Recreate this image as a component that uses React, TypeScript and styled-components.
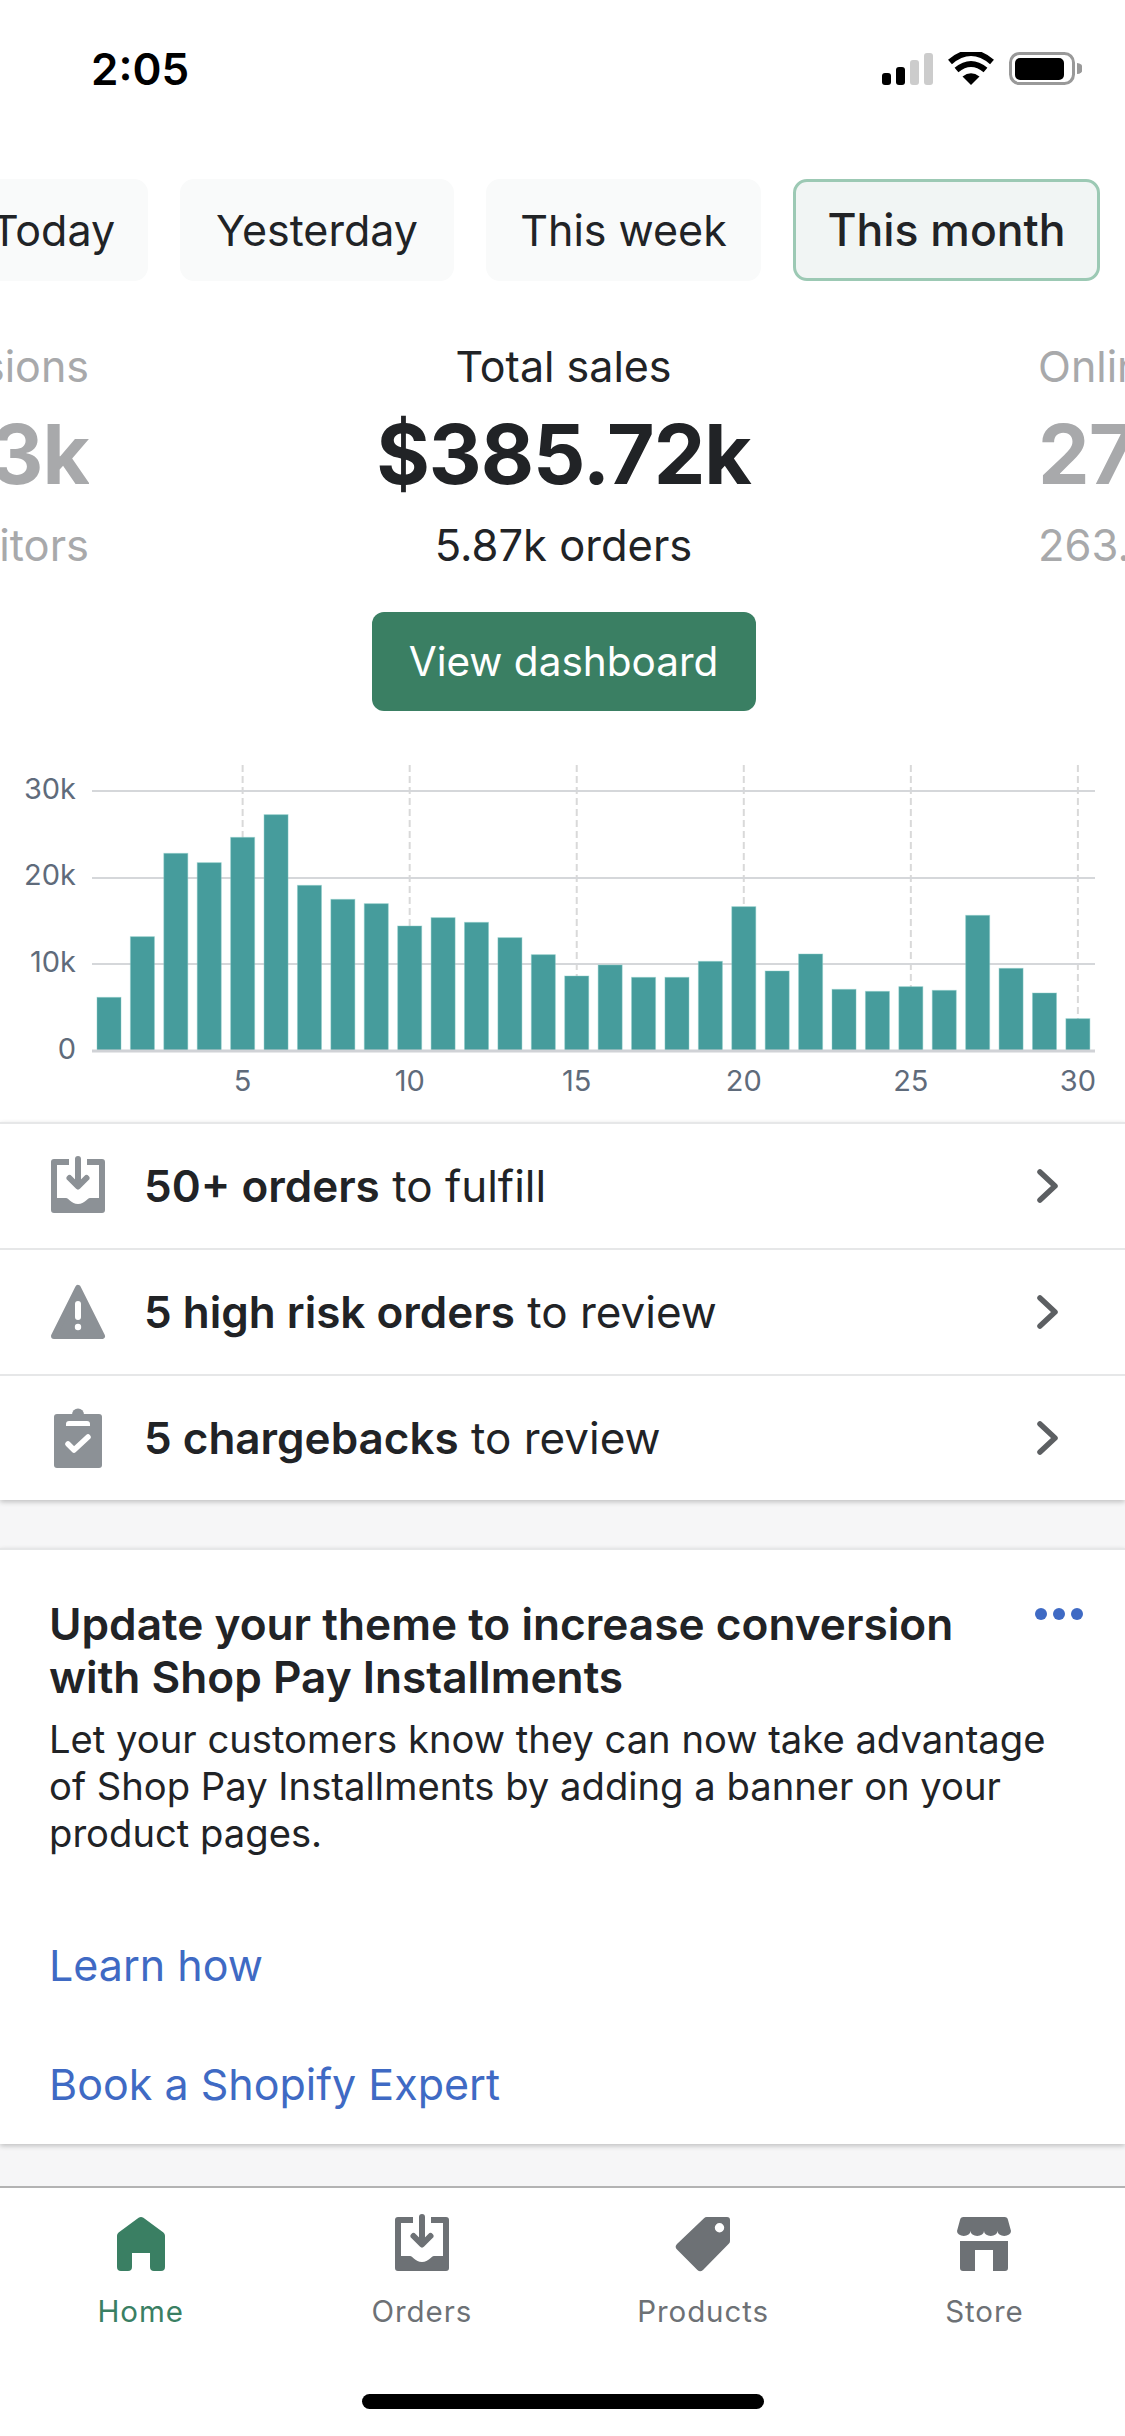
import styled, { createGlobalStyle } from 'styled-components';
import { ReactNode } from 'react';

const GlobalStyle = createGlobalStyle`
  html, body { margin: 0; padding: 0; background: #fff; }
  body { font-family: Inter, "Noto Sans", sans-serif; color: #212326; }
`;

const Screen = styled.div`
  width: 1125px;
  height: 2436px;
  overflow: hidden;
  display: flex;
  flex-direction: column;
  background: #f6f6f7;
`;

const Top = styled.div`
  background: #fff;
`;

const StatusBar = styled.div`
  height: 179px;
  box-sizing: border-box;
  padding: 44px 43px 0 91px;
  display: flex;
  justify-content: space-between;
  align-items: flex-start;
`;

const Time = styled.span`
  font-size: 44px;
  line-height: 50px;
  font-weight: 600;
  color: #000;
`;

const Pills = styled.div`
  display: flex;
  justify-content: flex-end;
  gap: 32px;
  padding-right: 25px;
  overflow: hidden;
`;

const Pill = styled.div<{ $active?: boolean; $width: number }>`
  flex: none;
  width: ${(p) => p.$width}px;
  height: 102px;
  box-sizing: border-box;
  display: flex;
  align-items: center;
  justify-content: center;
  font-size: ${(p) => (p.$active ? 44.5 : 43)}px;
  font-weight: ${(p) => (p.$active ? 500 : 400)};
  border-radius: 14px;
  background: ${(p) => (p.$active ? '#f1f5f4' : '#f9fafa')};
  border: 3px solid ${(p) => (p.$active ? '#9cc9b4' : '#f9fafa')};
  color: #212326;
`;

const Stats = styled.div`
  display: grid;
  grid-template-columns: 89px 1fr 87px;
  margin-top: 59px;
`;

const Stat = styled.div<{ $side?: 'left' | 'right' }>`
  display: flex;
  flex-direction: column;
  overflow: hidden;
  white-space: nowrap;
  align-items: ${(p) => (p.$side === 'left' ? 'flex-end' : p.$side === 'right' ? 'flex-start' : 'center')};
  color: ${(p) => (p.$side ? '#a8a9ab' : '#212326')};
`;

const StatLabel = styled.div`
  font-size: 43px;
  line-height: 52px;
`;

const StatValue = styled.div`
  font-size: 82px;
  line-height: 100px;
  font-weight: 700;
  letter-spacing: -1px;
  margin-top: 13px;
`;

const StatSub = styled.div`
  font-size: 43.5px;
  line-height: 52px;
  margin-top: 14px;
`;

const PrimaryButton = styled.div`
  align-self: center;
  margin: 41px auto 0;
  width: 384px;
  height: 99px;
  display: flex;
  align-items: center;
  justify-content: center;
  border-radius: 12px;
  background: #3a7f63;
  color: #fff;
  font-size: 40.5px;
`;

const Chart = styled.svg`
  display: block;
  margin-top: 39px;
`;

const List = styled.div`
  background: #fff;
  border-top: 2px solid #e6e7e8;
  box-shadow: 0 2px 5px rgba(0, 0, 0, 0.22);
  position: relative;
`;

const Row = styled.div<{ $last?: boolean }>`
  height: 124px;
  display: flex;
  align-items: center;
  padding: 0 65px 0 51px;
  border-bottom: ${(p) => (p.$last ? 'none' : '2px solid #e6e7e8')};
  font-size: 44px;
  color: #212326;
`;

const RowIcon = styled.svg`
  flex: none;
  width: 54px;
  height: 54px;
  overflow: visible;
  margin-right: 39px;
  fill: #8c9196;
`;

const RowText = styled.div`
  flex: 1;
  b {
    font-weight: 600;
  }
`;

const Card = styled.div`
  margin-top: 48px;
  height: 596px;
  box-sizing: border-box;
  background: #fff;
  border-top: 2px solid #e6e7e8;
  box-shadow: 0 2px 5px rgba(0, 0, 0, 0.22);
  padding: 48px 49px 0;
  position: relative;
`;

const CardTitle = styled.div`
  font-size: 44.2px;
  line-height: 53px;
  font-weight: 600;
  color: #212326;
`;

const CardBody = styled.div`
  font-size: 38.2px;
  line-height: 47px;
  margin-top: 12px;
  color: #212326;
`;

const CardLink = styled.div<{ $gap: number }>`
  font-size: 43px;
  line-height: 52px;
  color: #3f6ac4;
  margin-top: ${(p) => p.$gap}px;
`;

const Dots = styled.div`
  position: absolute;
  top: 58px;
  right: 42px;
  display: flex;
  gap: 6px;
  span {
    width: 12px;
    height: 12px;
    border-radius: 50%;
    background: #3f6ac4;
  }
`;

const TabBar = styled.div`
  margin-top: 42px;
  flex: 1;
  background: #fff;
  border-top: 2px solid #b3b3b3;
  display: flex;
  flex-direction: column;
`;

const Tabs = styled.div`
  display: grid;
  grid-template-columns: repeat(4, 1fr);
  padding-top: 29px;
`;

const Tab = styled.div<{ $active?: boolean }>`
  display: flex;
  flex-direction: column;
  align-items: center;
  color: ${(p) => (p.$active ? '#3a7f63' : '#6d7175')};
  fill: currentColor;
  font-size: 29.5px;
  line-height: 36px;
  letter-spacing: 0.9px;
`;

const TabIcon = styled.svg`
  width: 54px;
  height: 54px;
  overflow: visible;
  margin-bottom: 22px;
`;

const HomeIndicator = styled.div`
  width: 402px;
  height: 15px;
  border-radius: 8px;
  background: #000;
  margin: 65px auto 0;
`;

const BARS = [742, 560, 310, 338, 262, 194, 406, 448, 461, 528, 503, 517, 563, 614, 678, 645, 682, 682, 634, 470, 663, 612, 718, 724, 710, 721, 496, 655, 729, 806];
const barCenter = (day: number) => 109 + (day - 1) * 33.41;
const barTop = (v: number) => 750 + v / 3;

const InboxPath = 'M3 0H18V6H6V39H15C18 39 20 45 27 45C34 45 36 39 39 39H48V6H36V0H51a3 3 0 0 1 3 3V51a3 3 0 0 1-3 3H3a3 3 0 0 1-3-3V3a3 3 0 0 1 3-3Z';

const InboxGlyph = () => (
  <>
    <path d={InboxPath} />
    <path d="M27 0V26M18.5 19L27 27.5L35.5 19" fill="none" stroke="currentColor" strokeWidth="6" strokeLinecap="round" strokeLinejoin="round" />
  </>
);

const Chevron = () => (
  <svg width="24" height="36" viewBox="0 0 24 36" fill="none" stroke="#5c5f62" strokeWidth="5.5" strokeLinecap="round" strokeLinejoin="round">
    <path d="M4 4L19 18L4 32" />
  </svg>
);

const SalesChart = () => (
  <Chart width="1125" height="372" viewBox="0 750 1125 372">
    {[5, 10, 15, 20, 25, 30].map((d) => (
      <line key={d} x1={barCenter(d)} x2={barCenter(d)} y1="765" y2="1050" stroke="#d9d9d9" strokeWidth="2" strokeDasharray="7 4" />
    ))}
    {[791, 878, 964].map((y) => (
      <line key={y} x1="92" x2="1095" y1={y} y2={y} stroke="#d5d7da" strokeWidth="2" />
    ))}
    {BARS.map((v, i) => (
      <rect key={i} x={barCenter(i + 1) - 12} y={barTop(v)} width="24" height={1051 - barTop(v)} fill="#469c9c" stroke="#84c9c5" strokeOpacity="0.45" strokeWidth="1" />
    ))}
    <line x1="92" x2="1095" y1="1051" y2="1051" stroke="#d0d2d6" strokeWidth="3" />
    <g fontFamily="Inter" fontSize="29" fill="#5f6b7b">
      {[['30k', 799], ['20k', 885], ['10k', 972], ['0', 1059]].map(([t, y]) => (
        <text key={t} x="76" y={y} textAnchor="end">{t}</text>
      ))}
      {[5, 10, 15, 20, 25, 30].map((d) => (
        <text key={d} x={barCenter(d)} y="1091" textAnchor="middle">{d}</text>
      ))}
    </g>
  </Chart>
);

const SignalIcons = () => (
  <svg width="200" height="33" viewBox="882 52 200 33" style={{ marginTop: 8 }}>
    <rect x="882" y="73" width="9" height="12" rx="3" fill="#000" />
    <rect x="896" y="67" width="9" height="18" rx="3" fill="#000" />
    <rect x="910" y="60" width="9" height="25" rx="3" fill="#ccc" />
    <rect x="924" y="53" width="9" height="32" rx="3" fill="#ccc" />
    <path d="M971 85L962.5 76.5Q971 70 979.5 76.5Z" fill="#000" />
    <path d="M956.5 70Q971 58 985.5 70" fill="none" stroke="#000" strokeWidth="6" />
    <path d="M950 62Q971 44 992 62" fill="none" stroke="#000" strokeWidth="6" />
    <rect x="1010.5" y="53.5" width="63" height="30" rx="9" fill="none" stroke="#999" strokeWidth="3" />
    <rect x="1015" y="58" width="49" height="22" rx="5" fill="#000" />
    <path d="M1077 63a6 5.5 0 0 1 0 11Z" fill="#999" />
  </svg>
);

const TabItem = ({ label, active, children }: { label: string; active?: boolean; children: ReactNode }) => (
  <Tab $active={active}>
    <TabIcon viewBox="0 0 54 54">{children}</TabIcon>
    {label}
  </Tab>
);

const App = () => (
  <Screen>
    <GlobalStyle />
    <Top>
      <StatusBar>
        <Time>2:05</Time>
        <SignalIcons />
      </StatusBar>
      <Pills>
        <Pill $width={190}>Today</Pill>
        <Pill $width={274}>Yesterday</Pill>
        <Pill $width={275}>This week</Pill>
        <Pill $active $width={307}>This month</Pill>
      </Pills>
      <Stats>
        <Stat $side="left">
          <StatLabel>Sessions</StatLabel>
          <StatValue>3k</StatValue>
          <StatSub>Visitors</StatSub>
        </Stat>
        <Stat>
          <StatLabel>Total sales</StatLabel>
          <StatValue>$385.72k</StatValue>
          <StatSub>5.87k orders</StatSub>
          <PrimaryButton>View dashboard</PrimaryButton>
        </Stat>
        <Stat $side="right">
          <StatLabel>Online store</StatLabel>
          <StatValue>27</StatValue>
          <StatSub>263.</StatSub>
        </Stat>
      </Stats>
      <SalesChart />
    </Top>
    <List>
      <Row>
        <RowIcon viewBox="0 0 54 54" color="#8c9196"><InboxGlyph /></RowIcon>
        <RowText><b>50+ orders</b> to fulfill</RowText>
        <Chevron />
      </Row>
      <Row>
        <RowIcon viewBox="0 0 54 54">
          <path d="M27 3L51 51H3Z" stroke="#8c9196" strokeWidth="6" strokeLinejoin="round" />
          <path d="M27 19V32" stroke="#fff" strokeWidth="6" strokeLinecap="round" />
          <circle cx="27" cy="42" r="3.2" fill="#fff" />
        </RowIcon>
        <RowText><b>5 high risk orders</b> to review</RowText>
        <Chevron />
      </Row>
      <Row $last>
        <RowIcon viewBox="0 0 54 54">
          <circle cx="27" cy="3.5" r="6" />
          <rect x="3" y="3" width="48" height="54" rx="3" />
          <path d="M15 15V13a3 3 0 0 1 3-3H36a3 3 0 0 1 3 3V15Z" fill="#fff" />
          <path d="M17 33L23 39L37 26" fill="none" stroke="#fff" strokeWidth="5.5" strokeLinecap="round" strokeLinejoin="round" />
        </RowIcon>
        <RowText><b>5 chargebacks</b> to review</RowText>
        <Chevron />
      </Row>
    </List>
    <Card>
      <Dots><span /><span /><span /></Dots>
      <CardTitle>
        Update your theme to increase conversion
        <br />
        with Shop Pay Installments
      </CardTitle>
      <CardBody>
        Let your customers know they can now take advantage
        <br />
        of Shop Pay Installments by adding a banner on your
        <br />
        product pages.
      </CardBody>
      <CardLink $gap={82}>Learn how</CardLink>
      <CardLink $gap={67}>Book a Shopify Expert</CardLink>
    </Card>
    <TabBar>
      <Tabs>
        <TabItem label="Home" active>
          <path transform="translate(3 0)" d="M21.6.8a4 4 0 0 1 4.8 0L46.4 15.6a4 4 0 0 1 1.6 3.2V50a4 4 0 0 1-4 4H37a4 4 0 0 1-4-4V36H15V50a4 4 0 0 1-4 4H4a4 4 0 0 1-4-4V18.8a4 4 0 0 1 1.6-3.2Z" />
        </TabItem>
        <TabItem label="Orders"><g color="#6d7175"><InboxGlyph /></g></TabItem>
        <TabItem label="Products">
          <path fillRule="evenodd" d="M31 0H51a3 3 0 0 1 3 3V24a4 4 0 0 1-1 2.6L27 53a4 4 0 0 1-5.6 0L1 32.5a4 4 0 0 1 0-5.6L28 1.2A4 4 0 0 1 31 0ZM43.5 6a4.7 4.7 0 1 0 0 9.4a4.7 4.7 0 0 0 0-9.4Z" />
        </TabItem>
        <TabItem label="Store">
          <path d="M0 14L3 3Q3.5 0 6.5 0H47.5Q50.5 0 51 3L54 14a6.75 5 0 0 1-13.5 0a6.75 5 0 0 1-13.5 0a6.75 5 0 0 1-13.5 0a6.75 5 0 0 1-13.5 0Z" />
          <path d="M3 24H51V51a3 3 0 0 1-3 3H36V33H18V54H6a3 3 0 0 1-3-3Z" />
        </TabItem>
      </Tabs>
      <HomeIndicator />
    </TabBar>
  </Screen>
);

export default App;
